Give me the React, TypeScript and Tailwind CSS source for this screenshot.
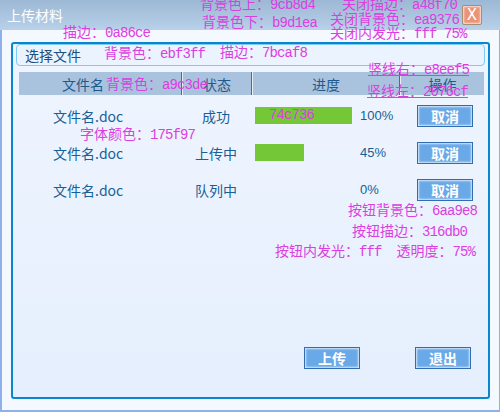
import React from 'react';

const cjk = "'Noto Sans CJK SC', 'Noto Sans', sans-serif";
const note = "'Liberation Mono', 'Noto Sans CJK SC', monospace";

type Row = { name: string; status: string; bar: number; pct: string };

const rows: Row[] = [
  { name: '文件名.doc', status: '成功', bar: 97, pct: '100%' },
  { name: '文件名.doc', status: '上传中', bar: 49, pct: '45%' },
  { name: '文件名.doc', status: '队列中', bar: 0, pct: '0%' },
];

// magenta notes written over the mockup
const notes: { text: string; x: number; y: number; u?: boolean }[] = [
  { text: '背景色上：9cb8d4', x: 200, y: -2 },
  { text: '背景色下：b9d1ea', x: 202, y: 16 },
  { text: '关闭描边：a48f70', x: 342, y: -2 },
  { text: '关闭背景色：ea9376', x: 330, y: 13 },
  { text: '关闭内发光：fff 75%', x: 330, y: 27 },
  { text: '描边：0a86ce', x: 63, y: 26 },
  { text: '背景色：ebf3ff', x: 104, y: 47 },
  { text: '描边：7bcaf8', x: 220, y: 46 },
  { text: '背景色：a9c3de', x: 106, y: 78 },
  { text: '竖线右：e8eef5', x: 368, y: 63, u: true },
  { text: '竖线左：2076cf', x: 367, y: 85, u: true },
  { text: '74c736', x: 269, y: 108 },
  { text: '字体颜色：175f97', x: 80, y: 128 },
  { text: '按钮背景色：6aa9e8', x: 348, y: 204 },
  { text: '按钮描边：316db0', x: 352, y: 225 },
  { text: '按钮内发光：fff  透明度：75%', x: 275, y: 245 },
];

// ascii runs are narrower than the cjk ones in the mockup font
function NoteText({ text }: { text: string }) {
  const parts = text.split(/([\x00-\x7f]+)/).filter(Boolean);
  return (
    <>
      {parts.map((p, i) =>
        /^[\x00-\x7f]+$/.test(p) ? (
          <span key={i} className="tracking-[-0.9px]">{p}</span>
        ) : (
          <span key={i}>{p}</span>
        )
      )}
    </>
  );
}

function Btn({ label }: { label: string }) {
  return (
    <button className="w-[56px] h-[22px] flex items-center justify-center bg-[#6aa9e8] border border-[#316db0] shadow-[inset_0_0_2px_1px_rgba(255,255,255,0.75)] text-white text-[14px] font-bold leading-none">
      {label}
    </button>
  );
}

function Divider() {
  return (
    <div className="flex h-full">
      <div className="w-px bg-[#2076cf]" />
      <div className="w-px bg-[#e8eef5]" />
    </div>
  );
}

export default function App() {
  return (
    <div className="relative w-[500px] h-[412px] flex flex-col overflow-hidden bg-[#f4f8ff]" style={{ fontFamily: cjk }}>
      <div className="h-[30px] shrink-0 flex items-center justify-between pl-[7px] pr-[18px] bg-gradient-to-b from-[#9cb8d4] to-[#b9d1ea]">
        <span className="text-white text-[14px] leading-none">上传材料</span>
        <button className="w-[20px] h-[20px] flex items-center justify-center rounded-[2px] bg-[#ea9376] border border-[#a48f70] shadow-[inset_0_0_2px_1px_rgba(255,255,255,0.75)] text-white text-[15px] leading-none" style={{ fontFamily: "'DejaVu Sans', sans-serif" }}>
          X
        </button>
      </div>

      <div className="flex-1 flex flex-col border-l-2 border-r border-b-2 border-[#8fb0ea] pl-[9px] pr-[9px] pt-[12px] pb-[11px]">
        <div className="flex-1 flex flex-col border-2 border-[#0a86ce] rounded-[3px] bg-gradient-to-b from-[#eff5ff] to-[#e5effd]">
          <div className="mx-[3px] h-[22px] flex items-center pl-[8px] border border-[#7bcaf8] rounded-[4px] bg-[#ebf3ff] text-[#1d4f7c] text-[14px] leading-none">
            选择文件
          </div>

          <div className="mt-[6px] ml-[6px] mr-[4px] h-[23px] flex bg-[#a9c3de] text-[#1f5a8f] text-[14px] leading-none">
            <div className="w-[162px] flex items-center justify-center pr-[34px]">文件名</div>
            <Divider />
            <div className="w-[68px] flex items-center justify-center">状态</div>
            <Divider />
            <div className="w-[146px] flex items-center justify-center">进度</div>
            <Divider />
            <div className="flex-1 flex items-center justify-center">操作</div>
          </div>

          <div className="mt-[2px] ml-[6px] mr-[4px] flex flex-col">
            {rows.map((r, i) => (
              <div key={i} className="h-[37px] flex items-center text-[#175f97] text-[14px] leading-none">
                <div className="w-[162px] pl-[34px]">{r.name}</div>
                <div className="w-[70px] text-center">{r.status}</div>
                <div className="w-[148px] flex items-center pl-[4px]">
                  <div className="w-[97px] h-[17px]">
                    {r.bar > 0 && <div className="h-full bg-[#74c736]" style={{ width: r.bar }} />}
                  </div>
                  <span className="ml-[8px] text-[13px]" style={{ fontFamily: "'Liberation Sans', sans-serif" }}>{r.pct}</span>
                </div>
                <div className="flex-1 pl-[18px]">
                  <Btn label="取消" />
                </div>
              </div>
            ))}
          </div>

          <div className="flex-1" />
          <div className="flex justify-end gap-[55px] pr-[17px] pb-[28px]">
            <Btn label="上传" />
            <Btn label="退出" />
          </div>
        </div>
      </div>

      {notes.map((n, i) => (
        <span
          key={i}
          className={`absolute whitespace-pre text-[14px] leading-[14px] text-[#dc3ee0] ${n.u ? 'underline' : ''}`}
          style={{ left: n.x, top: n.y, fontFamily: note }}
        >
          <NoteText text={n.text} />
        </span>
      ))}
    </div>
  );
}
